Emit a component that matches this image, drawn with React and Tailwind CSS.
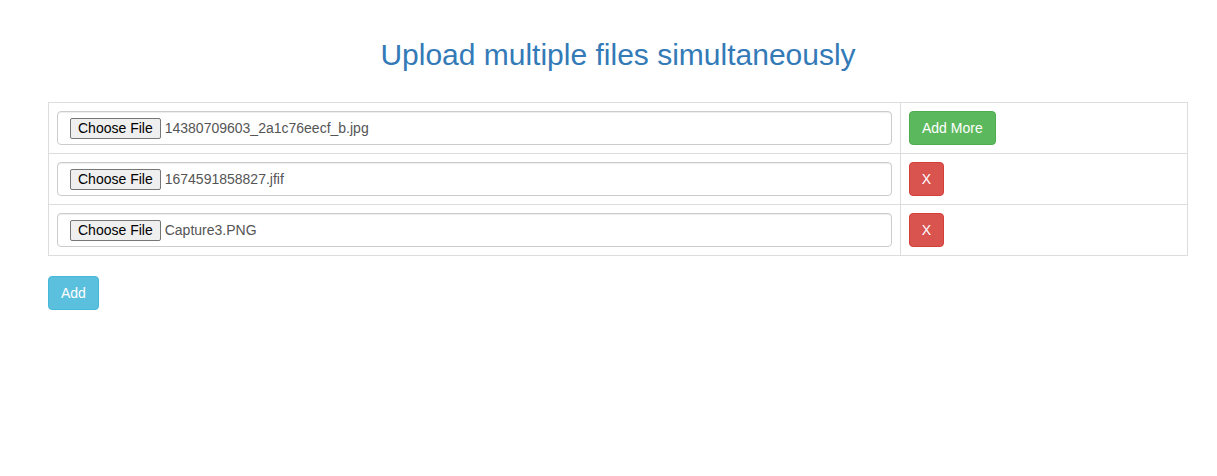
import React from 'react';

const files = [
  { name: '14380709603_2a1c76eecf_b.jpg', first: true },
  { name: '1674591858827.jfif' },
  { name: 'Capture3.PNG' },
];

function FileField({ name }) {
  return (
    <div className="flex h-[34px] items-center rounded border border-[#ccc] bg-white px-3 shadow-[inset_0_1px_1px_rgba(0,0,0,0.075)]">
      <span className="flex h-[21px] items-center rounded-[2px] border border-[#767676] bg-[#efefef] px-[7px] text-[14px] leading-none text-black">
        Choose File
      </span>
      <span className="ml-[4px] text-[14px] text-[#555]">{name}</span>
    </div>
  );
}

export default function App() {
  return (
    <div className="min-h-[476px] bg-white font-['Liberation_Sans',Arial,sans-serif] text-[14px] text-[#333]">
      <div className="ml-[48px] w-[1140px]">
        <h2 className="pt-[38px] text-center text-[30px] leading-[1.1] text-[#337ab7]">
          Upload multiple files simultaneously
        </h2>

        {/* file rows */}
        <table className="mt-[31px] w-full border-collapse border border-[#ddd]">
          <tbody>
            {files.map((f) => (
              <tr key={f.name} className="border-t border-[#ddd]">
                <td className="w-[852px] border border-[#ddd] p-2 align-top">
                  <FileField name={f.name} />
                </td>
                <td className="border border-[#ddd] p-2 align-top">
                  {f.first ? (
                    <button className="h-[34px] rounded border border-[#4cae4c] bg-[#5cb85c] px-3 text-[14px] text-white">
                      Add More
                    </button>
                  ) : (
                    <button className="h-[34px] w-[35px] rounded border border-[#d43f3a] bg-[#d9534f] text-[14px] text-white">
                      X
                    </button>
                  )}
                </td>
              </tr>
            ))}
          </tbody>
        </table>

        <button className="mt-[20px] h-[34px] rounded border border-[#46b8da] bg-[#5bc0de] px-3 text-[14px] text-white">
          Add
        </button>
      </div>
    </div>
  );
}
